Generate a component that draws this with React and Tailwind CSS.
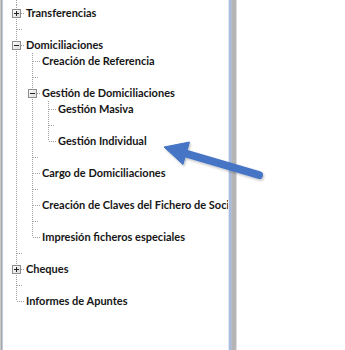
import React from "react";

const LINE = "#a0a0a0";

function Cell({ v = "none", h = false, box = null, short = false }) {
  return (
    <svg width="16" height="16" viewBox="0 0 16 16" className="shrink-0 block" shapeRendering="crispEdges">
      {v !== "none" && (
        <line x1="8.5" y1="0" x2="8.5" y2={v === "top" ? 8 : 16} stroke={LINE} strokeWidth="1" strokeDasharray="1 1" />
      )}
      {h && (
        <line x1={box ? 13 : 9} y1="8.5" x2={short ? 15 : 16} y2="8.5" stroke={LINE} strokeWidth="1" strokeDasharray="1 1" />
      )}
      {box && (
        <g>
          <defs>
            <linearGradient id="bx" x1="0" y1="0" x2="1" y2="1">
              <stop offset="0" stopColor="#ffffff" />
              <stop offset="1" stopColor="#d8d8d8" />
            </linearGradient>
          </defs>
          <rect x="4.5" y="4.5" width="8" height="8" fill="url(#bx)" stroke="#8e8e8e" />
          <rect x="6" y="8" width="5" height="1" fill="#222" />
          {box === "+" && <rect x="8" y="6" width="1" height="5" fill="#222" />}
        </g>
      )}
    </svg>
  );
}

const rows = [
  { cells: [{ v: "full", h: true, box: "+" }], text: "Transferencias" },
  { cells: [{ v: "full", h: true, short: true }] },
  { cells: [{ v: "full", h: true, box: "-" }], text: "Domiciliaciones" },
  { cells: [{ v: "full" }, { v: "full", h: true }], text: "Creación de Referencia" },
  { cells: [{ v: "full" }, { v: "full", h: true, short: true }] },
  { cells: [{ v: "full" }, { v: "full", h: true, box: "-" }], text: "Gestión de Domiciliaciones" },
  { cells: [{ v: "full" }, { v: "full" }, { v: "full", h: true }], text: "Gestión Masiva" },
  { cells: [{ v: "full" }, { v: "full" }, { v: "full", h: true, short: true }] },
  { cells: [{ v: "full" }, { v: "full" }, { v: "top", h: true }], text: "Gestión Individual" },
  { cells: [{ v: "full" }, { v: "full", h: true, short: true }] },
  { cells: [{ v: "full" }, { v: "full", h: true }], text: "Cargo de Domiciliaciones" },
  { cells: [{ v: "full" }, { v: "full", h: true, short: true }] },
  { cells: [{ v: "full" }, { v: "full", h: true }], text: "Creación de Claves del Fichero de Sociedades" },
  { cells: [{ v: "full" }, { v: "full", h: true, short: true }] },
  { cells: [{ v: "full" }, { v: "top", h: true }], text: "Impresión ficheros especiales" },
  { cells: [{ v: "full", h: true, short: true }] },
  { cells: [{ v: "full", h: true, box: "+" }], text: "Cheques" },
  { cells: [{ v: "full", h: true, short: true }] },
  { cells: [{ v: "top", h: true }], text: "Informes de Apuntes" },
];

export default function App() {
  return (
    <div className="relative flex h-[350px] w-[345px] overflow-hidden bg-white">
      <div className="w-px bg-[#c8c8c8]" />
      <div className="w-px bg-[#a8a8a8]" />
      <div className="w-px bg-[#bccae0]" />
      <div className="w-[225px] shrink-0 overflow-hidden pl-[5px]">
        <svg width="16" height="5" className="block" shapeRendering="crispEdges">
          <line x1="8.5" y1="0" x2="8.5" y2="5" stroke={LINE} strokeWidth="1" strokeDasharray="1 1" />
        </svg>
        {rows.map((r, i) => (
          <div key={i} className="flex h-4 items-center whitespace-nowrap">
            {r.cells.map((c, j) => (
              <Cell key={j} {...c} />
            ))}
            {r.text && (
              <span className="ml-[2px] text-[11px] leading-4 font-bold text-[#161616] [font-family:Lato,'Liberation_Sans',sans-serif]">
                {r.text}
              </span>
            )}
          </div>
        ))}
      </div>
      <div className="w-px bg-[#dfe7f3]" />
      <div className="w-[2px] bg-[#a9bde0]" />
      <div className="w-px bg-[#b2bccb]" />
      <div className="w-[4px] bg-[#b5b5b5]" />
      <div className="w-px bg-[#dedede]" />
      <div className="flex-1 bg-white" />
      <svg className="pointer-events-none absolute left-0 top-0" width="345" height="350">
        <defs>
          <filter id="sh" x="-20%" y="-20%" width="140%" height="140%">
            <feDropShadow dx="1" dy="1.5" stdDeviation="1.2" floodColor="#000" floodOpacity="0.25" />
          </filter>
        </defs>
        <g filter="url(#sh)">
          <line x1="259" y1="175" x2="184" y2="153" stroke="#4674c6" strokeWidth="8" strokeLinecap="round" />
          <polygon points="164,147 189.5,142 183,164.5" fill="#4674c6" stroke="#4674c6" strokeWidth="1" strokeLinejoin="round" />
        </g>
      </svg>
    </div>
  );
}
